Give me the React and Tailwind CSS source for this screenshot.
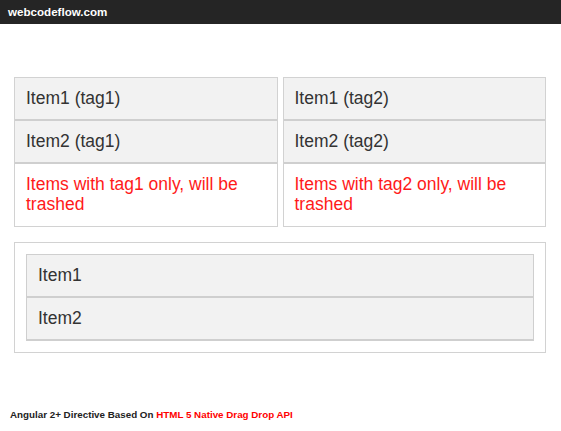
import React from 'react';

const Row = ({ children }) => (
  <div className="h-[43px] flex items-center px-[11px] bg-[#f2f2f2] border-b-2 border-[#cfcfcf] text-[17.5px] text-[#333]">
    {children}
  </div>
);

const TagList = ({ tag }) => (
  <div className="border border-[#d2d2d2] bg-white">
    <Row>Item1 ({tag})</Row>
    <Row>Item2 ({tag})</Row>
    <div className="h-[62px] px-[11px] pt-[10px] text-[17.5px] leading-[20px] text-[#ff1a1a]">
      Items with {tag} only, will be trashed
    </div>
  </div>
);

const App = () => {
  return (
    <div className="w-[561px] h-[431px] bg-white flex flex-col font-['Liberation_Sans',Arial,sans-serif]">
      <div className="h-[24px] bg-[#252525] flex items-center px-2 text-white text-[11.6px] font-bold">
        webcodeflow.com
      </div>

      <div className="pl-[14px] pr-[15px] pt-[53px]">
        <div className="grid grid-cols-2 gap-[5px]">
          <TagList tag="tag1" />
          <TagList tag="tag2" />
        </div>

        <div className="mt-[15px] border border-[#d2d2d2] p-[11px]">
          <div className="border border-[#cfcfcf] border-b-0">
            <Row>Item1</Row>
            <Row>Item2</Row>
          </div>
        </div>
      </div>

      <div className="mt-auto mb-[10px] px-[10px] text-[9.8px] leading-[12px] font-bold text-[#222]">
        Angular 2+ Directive Based On <span className="text-[#ff0000]">HTML 5 Native Drag Drop API</span>
      </div>
    </div>
  );
};

export default App;
